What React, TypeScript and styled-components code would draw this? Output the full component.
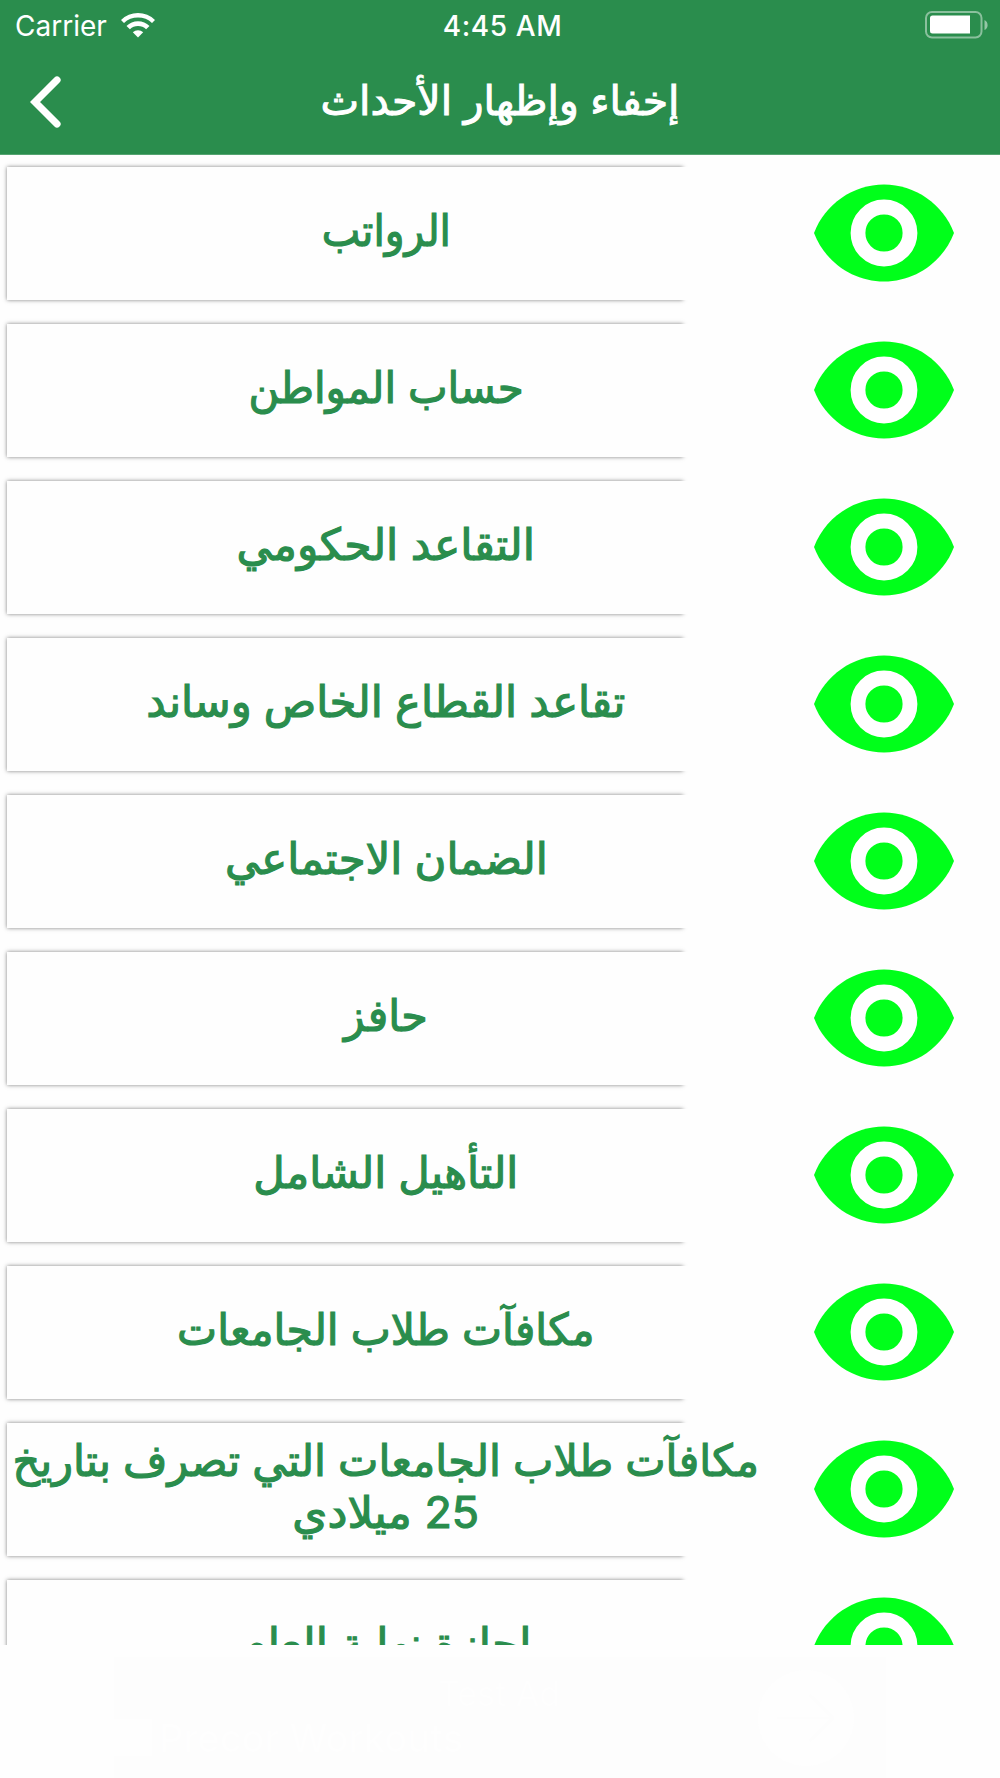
import React from "react";
import styled, { createGlobalStyle } from "styled-components";

type T_Line = {
  text: string;
  stretch: number;
};

type T_Event = {
  id: number;
  lines: T_Line[];
};

const events: T_Event[] = [
  { id: 1, lines: [{ text: "الرواتب", stretch: 0.93 }] },
  { id: 2, lines: [{ text: "حساب المواطن", stretch: 0.955 }] },
  { id: 3, lines: [{ text: "التقاعد الحكومي", stretch: 1.003 }] },
  { id: 4, lines: [{ text: "تقاعد القطاع الخاص وساند", stretch: 0.987 }] },
  { id: 5, lines: [{ text: "الضمان الاجتماعي", stretch: 0.988 }] },
  { id: 6, lines: [{ text: "حافز", stretch: 0.975 }] },
  { id: 7, lines: [{ text: "التأهيل الشامل", stretch: 0.983 }] },
  { id: 8, lines: [{ text: "مكافآت طلاب الجامعات", stretch: 0.967 }] },
  {
    id: 9,
    lines: [
      { text: "مكافآت طلاب الجامعات التي تصرف بتاريخ", stretch: 0.975 },
      { text: "25 ميلادي", stretch: 1.02 },
    ],
  },
  { id: 10, lines: [{ text: "إجازة نهاية العام", stretch: 1 }] },
];

const WifiIcon = () => (
  <svg width="34" height="25" viewBox="0 0 34 25" fill="#fff">
    <path d="M17 24.5 L11.8 19.3 A7.4 7.4 0 0 1 22.2 19.3 Z" />
    <path d="M8.9 16.2 L5.5 12.9 A16.3 16.3 0 0 1 28.5 12.9 L25.1 16.2 A11.6 11.6 0 0 0 8.9 16.2 Z" />
    <path d="M3 10.1 L0 7 A24.2 24.2 0 0 1 34 7 L31 10.1 A20 20 0 0 0 3 10.1 Z" />
  </svg>
);

const BatteryIcon = () => (
  <svg width="63" height="28" viewBox="0 0 63 28">
    <rect x="1" y="1" width="55.5" height="25.5" rx="6" fill="none" stroke="#fff" strokeOpacity="0.45" strokeWidth="2" />
    <path d="M59.5 9 Q62.6 10.5 62.6 14 Q62.6 17.5 59.5 19 Z" fill="#fff" fillOpacity="0.5" />
    <path d="M7.5 4.5 H45 V22.5 H7.5 Q5 22.5 5 20 V7 Q5 4.5 7.5 4.5 Z" fill="#fff" />
  </svg>
);

const BackIcon = () => (
  <svg width="32" height="52" viewBox="0 0 32 52">
    <path d="M27 4 L5 26 L27 48" fill="none" stroke="#fff" strokeWidth="7.2" strokeLinecap="round" strokeLinejoin="miter" />
  </svg>
);

const EyeIcon = () => (
  <svg width="140" height="98" viewBox="0 0 140 98">
    <path d="M0 49 C11 20 39 0.5 70 0.5 C101 0.5 129 20 140 49 C129 78 101 97.5 70 97.5 C39 97.5 11 78 0 49 Z" fill="#00ff1a" />
    <circle cx="70" cy="49" r="26" fill="none" stroke="#fff" strokeWidth="14.8" />
  </svg>
);

const ArrowIcon = () => (
  <svg width="58" height="50" viewBox="0 0 58 50">
    <path d="M0 25 H56 M33 2 L56 25 L33 48" fill="none" stroke="#fdfdfd" strokeWidth="2" />
  </svg>
);

const App = () => {
  return (
    <StyledScreen>
      <GlobalStyle />
      <StyledHeader>
        <StyledStatusBar>
          <StyledCarrier>
            <span>Carrier</span>
            <WifiIcon />
          </StyledCarrier>
          <StyledTime>4:45 AM</StyledTime>
          <StyledBattery>
            <BatteryIcon />
          </StyledBattery>
        </StyledStatusBar>
        <StyledNavBar>
          <StyledBackButton aria-label="Back">
            <BackIcon />
          </StyledBackButton>
          <StyledTitle dir="rtl">إخفاء وإظهار الأحداث</StyledTitle>
        </StyledNavBar>
      </StyledHeader>
      <StyledList>
        {events.map(({ id, lines }) => (
          <StyledRow key={id}>
            <StyledCard>
              <StyledLabel dir="rtl">
                {lines.map(({ text, stretch }) => (
                  <StyledLine key={text} $stretch={stretch}>
                    {text}
                  </StyledLine>
                ))}
              </StyledLabel>
            </StyledCard>
            <StyledToggle aria-label={lines[0].text}>
              <EyeIcon />
            </StyledToggle>
          </StyledRow>
        ))}
      </StyledList>
      <StyledFooter>
        <StyledAd>
          <StyledAdText>
            <StyledAdTag>Test Ad</StyledAdTag>
            <StyledAdTitle>
              <StyledAdLogo />
              Precor Workouts
            </StyledAdTitle>
          </StyledAdText>
          <StyledAdButton>
            <ArrowIcon />
          </StyledAdButton>
        </StyledAd>
      </StyledFooter>
    </StyledScreen>
  );
};

export default App;

const GlobalStyle = createGlobalStyle`
  body {
    margin: 0;
    background: #fefefe;
  }
  button {
    padding: 0;
    border: 0;
    background: none;
  }
  svg {
    display: block;
  }
`;
const StyledScreen = styled.div`
  display: flex;
  flex-direction: column;
  width: 1000px;
  height: 1778px;
  overflow: hidden;
  font-family: Inter, "DejaVu Sans", sans-serif;
`;
const StyledHeader = styled.header`
  flex: none;
  box-sizing: border-box;
  height: 155px;
  background: #2a8d4d;
  border-bottom: 1px solid #55a471;
  color: #fff;
`;
const StyledStatusBar = styled.div`
  display: grid;
  grid-template-columns: 1fr auto 1fr;
  align-items: center;
  height: 50px;
  padding: 0 12px 0 15px;
`;
const StyledCarrier = styled.div`
  display: flex;
  align-items: center;
  gap: 14px;
  font-size: 28px;

  & > span {
    padding-top: 2px;
  }
`;
const StyledTime = styled.div`
  padding: 2px 0 0 2px;
  font-size: 28px;
  font-weight: 500;
  letter-spacing: 0.6px;
`;
const StyledBattery = styled.div`
  justify-self: end;
`;
const StyledNavBar = styled.div`
  display: grid;
  grid-template-columns: 100px 1fr 100px;
  align-items: center;
  height: 104px;
`;
const StyledBackButton = styled.button`
  padding-left: 30px;
`;
const StyledTitle = styled.h1`
  margin: 0;
  padding-bottom: 5px;
  text-align: center;
  font-size: 41px;
  font-weight: 400;
  white-space: nowrap;
  -webkit-text-stroke: 1px #fff;
`;
const StyledList = styled.main`
  flex: none;
  height: 1490px;
  overflow: hidden;
`;
const StyledRow = styled.div`
  display: flex;
  align-items: center;
  height: 157px;
`;
const StyledCard = styled.div`
  position: relative;
  display: flex;
  align-items: center;
  justify-content: center;
  width: 758px;
  height: 133px;
  margin-left: 7px;
  background: #fefefe;

  /* the shadow stops short of the card's right edge */
  &::before {
    content: "";
    position: absolute;
    z-index: -1;
    inset: 0 82px 0 0;
    box-shadow: 0 0 4px rgba(0, 0, 0, 0.5);
  }
`;
const StyledLabel = styled.div`
  padding-bottom: 7px;
  color: #2a8d4d;
  font-size: 44px;
  line-height: 52px;
  text-align: center;
  white-space: nowrap;
  -webkit-text-stroke: 1.2px #2a8d4d;
`;
const StyledLine = styled.div<{ $stretch: number }>`
  transform: scaleX(${({ $stretch }) => $stretch});
`;
const StyledToggle = styled.button`
  margin: 0 0 2px 49px;
`;
const StyledFooter = styled.footer`
  flex: 1;
  display: flex;
  align-items: flex-end;
  justify-content: center;
  background: #fefefe;
`;
const StyledAd = styled.div`
  display: flex;
  align-items: center;
  justify-content: space-between;
  box-sizing: border-box;
  width: 772px;
  height: 121px;
  padding-right: 32px;
  background: #fdfdfd;
  color: #fefefe;
`;
const StyledAdText = styled.div`
  display: flex;
  flex-direction: column;
  width: 446px;
`;
const StyledAdTag = styled.span`
  align-self: flex-end;
  font-size: 34px;
  line-height: 40px;
`;
const StyledAdTitle = styled.span`
  display: flex;
  align-items: center;
  gap: 7px;
  font-size: 38px;
  font-weight: 500;
  line-height: 48px;
  white-space: nowrap;
`;
const StyledAdLogo = styled.i`
  width: 38px;
  height: 37px;
  background: #fefefe;
`;
const StyledAdButton = styled.div`
  display: flex;
  align-items: center;
  justify-content: center;
  width: 96px;
  height: 96px;
  border-radius: 50%;
  background: #fefefe;
`;
